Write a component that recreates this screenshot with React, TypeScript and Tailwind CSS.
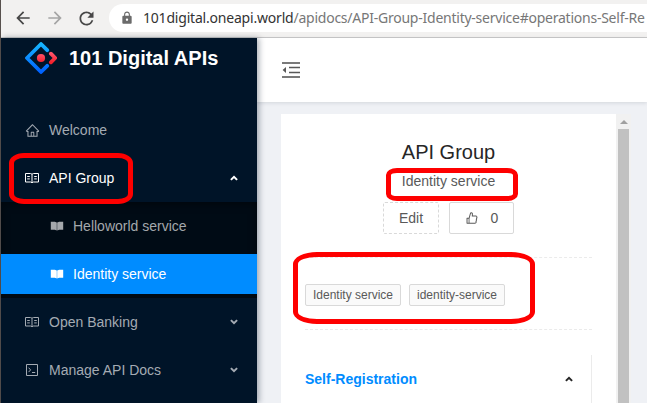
import type { ReactNode } from 'react';
import { AiOutlineHome, AiOutlineLike } from 'react-icons/ai';
import { MdArrowBack, MdArrowForward, MdLock, MdRefresh } from 'react-icons/md';

function Chevron({ up = false, className = '' }: { up?: boolean; className?: string }) {
  return (
    <svg viewBox="0 0 8 6" className={className} fill="none" stroke="currentColor" strokeWidth="2">
      <path d={up ? 'M.9 4.9 4 1.9l3.1 3' : 'M.9 1.1 4 4.1l3.1-3'} />
    </svg>
  );
}

function ReadOutline() {
  return (
    <svg viewBox="0 0 14 14" className="size-[14px] shrink-0" fill="none" stroke="currentColor">
      <path d="M.5 2.5h5L7 3.2l1.5-.7h5v8.5h-5L7 11.7 5.5 11h-5zM7 3.2v8.5M2.2 5.5h2.6M2.2 7.9h2.6M9.2 5.5h2.6M9.2 7.9h2.6" />
    </svg>
  );
}

function ReadFilled() {
  return (
    <svg viewBox="0 0 14 14" className="size-[14px] shrink-0" fill="currentColor">
      <path d="M.8 2.7h4l2 .9v8l-2-.8h-4zM13.2 2.7h-4l-2 .9v8l2-.8h4z" />
    </svg>
  );
}

function CodeOutline() {
  return (
    <svg viewBox="0 0 14 14" className="size-[14px] shrink-0" fill="none" stroke="currentColor">
      <path d="M1.5 1.5h11v11h-11zM3.6 4.7l2 2.2-2 2.2M7 9.5h3.2" />
    </svg>
  );
}

function MenuFold() {
  return (
    <svg viewBox="0 0 20 20" className="size-5 shrink-0" fill="currentColor">
      <path opacity=".8" d="M1 2h18v2H1zM1 16h18v2H1z" />
      <path d="M8 6.8h11v1.5H8zM8 11.7h11v1.5H8zM5 7v6L1.6 10z" />
    </svg>
  );
}

function BrowserBar() {
  return (
    <div className="flex h-[38px] shrink-0 items-center border-b border-[#c9c9c9] bg-[#f2f1f0] pb-px text-[#474747]">
      <MdArrowBack className="ml-3 size-5 shrink-0" />
      <MdArrowForward className="ml-3 size-5 shrink-0 text-[#a5a5a5]" />
      <MdRefresh className="ml-[11px] size-[21px] shrink-0" />
      <div className="ml-[12px] flex h-7 flex-1 items-center overflow-hidden rounded-l-full bg-white pl-[11px]">
        <MdLock className="size-[14px] shrink-0 text-[#6b6b6b]" />
        <span className="ml-[9px] whitespace-nowrap pb-0.5 font-['Noto_Sans',sans-serif] text-[14px] tracking-[-0.24px] text-[#777]">
          <span className="tracking-[-0.2px] text-[#333]">101digital.oneapi.world</span>
          <span>/apidocs/API-Group-Identity-service#operations-Self-Re</span>
        </span>
      </div>
    </div>
  );
}

function Logo() {
  return (
    <svg viewBox="0 0 32 32" className="size-8 shrink-0">
      <defs>
        <linearGradient id="blue" x1="0" y1="0" x2="0" y2="1">
          <stop offset="0" stopColor="#16b5ff" />
          <stop offset="1" stopColor="#0062ff" />
        </linearGradient>
        <linearGradient id="red" x1="0" y1="0" x2="0" y2="1">
          <stop offset="0" stopColor="#ff5268" />
          <stop offset="1" stopColor="#f5222d" />
        </linearGradient>
      </defs>
      <path
        d="M22.2 8.2 16 2 2 16l14 14 6.2-6.2"
        fill="none"
        stroke="url(#blue)"
        strokeWidth="3.8"
        strokeLinecap="round"
        strokeLinejoin="round"
      />
      <path
        d="m25.9 11.7 4.3 4.3-4.3 4.3"
        fill="none"
        stroke="url(#red)"
        strokeWidth="3.8"
        strokeLinecap="round"
        strokeLinejoin="round"
      />
      <circle cx="16" cy="16" r="4.1" fill="url(#red)" />
    </svg>
  );
}

function MenuItem({ icon, label, arrow, active = false }: { icon: ReactNode; label: string; arrow?: 'up' | 'down'; active?: boolean }) {
  return (
    <div className={`my-1 flex h-10 items-center pl-6 pr-[19px] ${active ? 'text-white' : 'text-[#a4abb3]'}`}>
      {icon}
      <span className="ml-[10px] flex-1">{label}</span>
      {arrow && <Chevron up={arrow === 'up'} className="w-2" />}
    </div>
  );
}

function SubItem({ label, active = false }: { label: string; active?: boolean }) {
  return (
    <div className={`flex h-10 items-center pl-[49px] ${active ? 'bg-[#008cff] text-white' : 'text-[#a4a8ac]'}`}>
      <ReadFilled />
      <span className="ml-[9px]">{label}</span>
    </div>
  );
}

function Sidebar() {
  return (
    <aside className="z-10 flex w-64 shrink-0 flex-col bg-[#001428] shadow-[2px_0_6px_rgba(0,21,41,0.35)]">
      <div className="flex h-16 items-start pl-6 pt-1">
        <Logo />
        <h1 className="ml-3 text-[20px] font-bold leading-8 text-white">101 Digital APIs</h1>
      </div>
      <nav className="flex flex-col pt-1 text-[14px]">
        <MenuItem icon={<AiOutlineHome className="-mr-px size-[15px]" />} label="Welcome" />
        <MenuItem icon={<ReadOutline />} label="API Group" arrow="up" active />
        <div className="flex flex-col gap-2 bg-[#000b15] py-1 shadow-[inset_0_2px_8px_rgba(0,0,0,0.45)]">
          <SubItem label="Helloworld service" />
          <SubItem label="Identity service" active />
        </div>
        <MenuItem icon={<ReadOutline />} label="Open Banking" arrow="down" />
        <MenuItem icon={<CodeOutline />} label="Manage API Docs" arrow="down" />
      </nav>
    </aside>
  );
}

function Tag({ children }: { children: ReactNode }) {
  return (
    <span className="flex h-[22px] w-24 items-center justify-center whitespace-nowrap rounded-[2px] border border-[#d9d9d9] bg-[#fafafa] text-[12px]">
      {children}
    </span>
  );
}

function GroupCard() {
  return (
    <section className="flex w-[335px] shrink-0 flex-col bg-white px-6 pt-6 text-[14px] text-[#595959]">
      <h2 className="text-center text-[20px] leading-7 text-[#262626]">API Group</h2>
      <p className="mt-1 text-center leading-[22px]">Identity service</p>
      <div className="mt-[10px] flex justify-center gap-[10px]">
        <button className="flex h-8 w-14 items-center justify-center rounded-[2px] border border-dashed border-[#d9d9d9]">Edit</button>
        <button className="flex h-8 w-[65px] items-center justify-center gap-3 rounded-[2px] border border-[#d9d9d9]">
          <AiOutlineLike className="size-[14px]" />
          <span>0</span>
        </button>
      </div>
      <div className="mt-[23px] flex h-[73px] items-center gap-2 border-y border-dashed border-[#ebebeb] pt-[3px]">
        <Tag>Identity service</Tag>
        <Tag>identity-service</Tag>
      </div>
      <div className="mt-[25px] flex flex-1 items-start justify-between border-r border-[#ebebeb] pr-[18px] pt-[13px]">
        <strong className="leading-[22px] text-[#008cff]">Self-Registration</strong>
        <Chevron up className="mt-2 w-2 text-[#262626]" />
      </div>
    </section>
  );
}

export default function App() {
  return (
    <div className="relative flex h-[403px] w-[647px] overflow-hidden bg-[#57504d] pl-px font-['Liberation_Sans',Arial,sans-serif]">
      <div className="flex min-w-0 flex-1 flex-col">
        <BrowserBar />
        <div className="flex min-h-0 flex-1">
          <Sidebar />
          <main className="flex min-w-0 flex-1 flex-col bg-[#eff1f5]">
            <header className="flex h-16 shrink-0 items-center bg-white pl-6 text-[#595959] shadow-[0_1px_4px_rgba(0,21,41,0.12)]">
              <MenuFold />
            </header>
            <div className="flex min-h-0 flex-1 pl-6 pt-3">
              <GroupCard />
              <div className="flex w-[15px] flex-col items-center bg-[#f1f1f1] pt-[6px]">
                <svg viewBox="0 0 8 4" className="h-1 w-2 shrink-0 fill-[#a0a0a0]">
                  <path d="M4 0 8 4H0z" />
                </svg>
                <div className="mt-[5px] w-[11px] flex-1 bg-[#c1c1c1]" />
              </div>
            </div>
          </main>
        </div>
      </div>
      <div className="absolute left-[9px] top-[153px] z-20 h-[51px] w-[124px] rounded-[15px/10px] border-[5px] border-[#fe0000]" />
      <div className="absolute left-[386px] top-[168px] z-20 h-[33px] w-[132px] rounded-[11px/7px] border-[5px] border-[#fe0000]" />
      <div className="absolute left-[293px] top-[252px] z-20 h-[72px] w-[242px] rounded-[24px/12px] border-[5px] border-[#fe0000]" />
    </div>
  );
}
